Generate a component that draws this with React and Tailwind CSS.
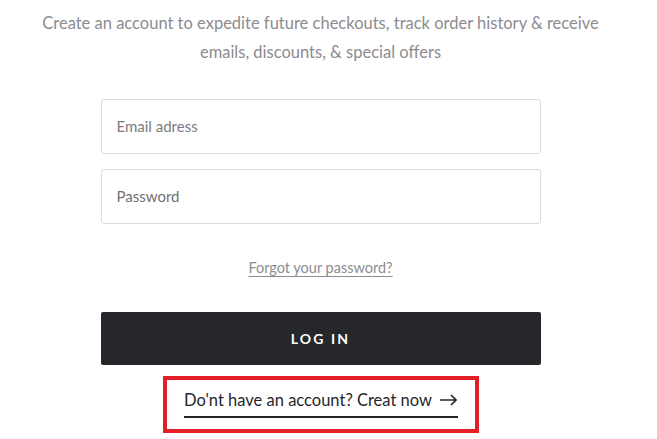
export default function App() {
  return (
    <div className="w-[657px] h-[439px] bg-white overflow-hidden" style={{ fontFamily: "Lato, 'Open Sans', sans-serif" }}>
      <div className="w-[641px] flex flex-col items-center">
        <p className="pt-[9px] text-center text-[16.5px] leading-[29px] text-[#8c8c91] w-[620px]">
          Create an account to expedite future checkouts, track order history &amp; receive
          <br />
          emails, discounts, &amp; special offers
        </p>
        <div className="mt-[32px] w-[440px] flex flex-col gap-[15px]">
          <div className="h-[55px] border border-[#dcdce0] rounded-[3px] flex items-center px-[15px] text-[15px] text-[#7c7c80]">
            Email adress
          </div>
          <div className="h-[55px] border border-[#dcdce0] rounded-[3px] flex items-center px-[15px] text-[15px] text-[#6f6f73]">
            Password
          </div>
        </div>
        <a className="mt-[34px] text-[14.5px] leading-[20px] text-[#8c8c91] underline underline-offset-[3px]">
          Forgot your password?
        </a>
        <button className="mt-[34px] w-[440px] h-[53px] bg-[#26272b] rounded-[2px] text-white text-[14px] font-bold tracking-[0.15em]">
          LOG IN
        </button>
        <div className="mt-[11px] w-[316px] h-[57px] border-[4px] border-[#e41e26] flex flex-col items-center">
          <div className="mt-[10px] flex items-center gap-[8px] text-[16.5px] leading-[20px] text-[#26272b]">
            <span>Do'nt have an account? Creat now</span>
            <svg width="17" height="12" viewBox="0 0 17 12" fill="none" stroke="#26272b" strokeWidth="1.6">
              <path d="M0 6h16M11 1l5 5-5 5" />
            </svg>
          </div>
          <div className="mt-[6px] w-[274px] h-[2px] bg-[#26272b]" />
        </div>
      </div>
    </div>
  );
}
